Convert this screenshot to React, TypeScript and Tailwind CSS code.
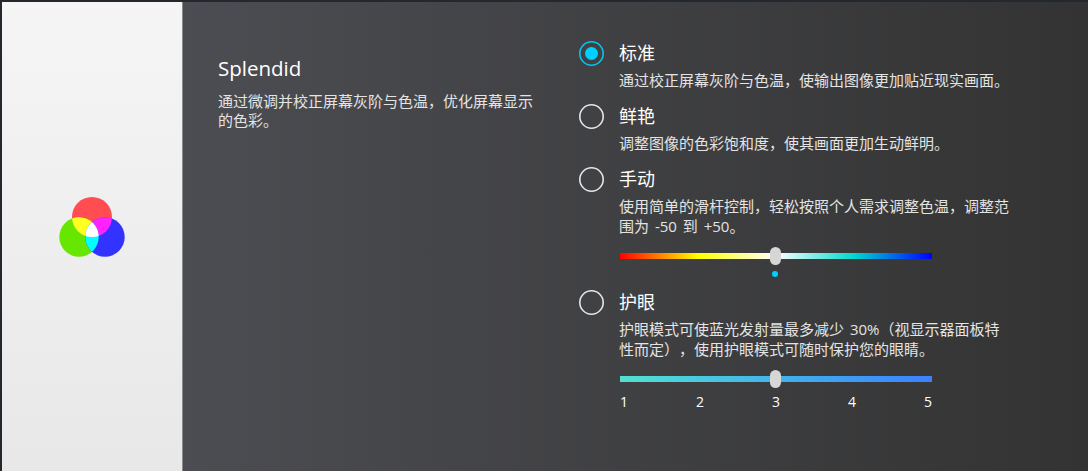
const font = { fontFamily: '"Open Sans", "Noto Sans CJK SC", sans-serif' };

function Radio({ checked }: { checked?: boolean }) {
  return (
    <svg width="25" height="25" viewBox="0 0 25 25" className="shrink-0">
      <circle cx="12.5" cy="12.5" r="11.7" fill="none" strokeWidth="1.6" stroke={checked ? '#00c8f0' : '#e6e6e6'} />
      {checked && <circle cx="12.5" cy="12.5" r="6.5" fill="#00d0ff" />}
    </svg>
  );
}

function Option({ title, checked, children, className }: { title: string; checked?: boolean; children: React.ReactNode; className?: string }) {
  return (
    <div className={`flex ${className ?? ''}`}>
      <div className="pr-[15px]">
        <Radio checked={checked} />
      </div>
      <div className="w-[395px]">
        <div className="h-[25px] text-[18px] leading-[25px] text-white">{title}</div>
        {children}
      </div>
    </div>
  );
}

function Desc({ children }: { children: React.ReactNode }) {
  return <p className="mt-[4px] text-[15px] leading-[20px] text-[#e4e4e4] [text-spacing-trim:space-all] [word-spacing:2px]">{children}</p>;
}

function Thumb() {
  return <span className="absolute left-[150px] top-1/2 h-[18px] w-[11px] -translate-y-1/2 rounded-full bg-[#d6d6d6]" />;
}

function Logo() {
  return (
    <svg width="66" height="60" viewBox="0 0 66 60">
      <defs>
        <clipPath id="r"><circle cx="33" cy="20" r="20" /></clipPath>
        <clipPath id="g"><circle cx="20" cy="40" r="19.7" /></clipPath>
      </defs>
      <circle cx="33" cy="20" r="20" fill="#ff4d52" />
      <circle cx="20" cy="40" r="19.7" fill="#66e600" />
      <circle cx="46" cy="40" r="19.7" fill="#3333ff" />
      <g clipPath="url(#r)">
        <circle cx="20" cy="40" r="19.7" fill="#ffff22" />
        <circle cx="46" cy="40" r="19.7" fill="#ff22ff" />
      </g>
      <g clipPath="url(#g)">
        <circle cx="46" cy="40" r="19.7" fill="#00ffff" />
      </g>
      <g clipPath="url(#r)">
        <g clipPath="url(#g)">
          <circle cx="46" cy="40" r="19.7" fill="#ffffff" />
        </g>
      </g>
    </svg>
  );
}

export default function App() {
  return (
    <div className="h-[471px] w-[1088px] overflow-hidden bg-[#23272e] pl-[2px] pt-[2px]" style={font}>
      <div className="flex h-[469px]">
        <div className="flex h-full w-[181px] shrink-0 items-center justify-center border-r border-[#8a8a8a] bg-gradient-to-b from-[#f5f5f5] to-[#e8e8e8] pb-[22px]">
          <div className="mt-[2px]"><Logo /></div>
        </div>
        <div className="flex flex-1 bg-gradient-to-r from-[#4c4d52] to-[#333333]">
          <div className="w-[396px] shrink-0 pl-[35px] pt-[53px] pr-[40px]">
            <div className="text-[20.5px] leading-[26px] text-white">Splendid</div>
            <p className="mt-[11px] text-[15px] leading-[19px] text-[#e4e4e4]">通过微调并校正屏幕灰阶与色温，优化屏幕显示的色彩。</p>
          </div>
          <div className="pt-[39px]">
            <Option title="标准" checked>
              <Desc>通过校正屏幕灰阶与色温，使输出图像更加贴近现实画面。</Desc>
            </Option>
            <Option title="鲜艳" className="mt-[14px]">
              <Desc>调整图像的色彩饱和度，使其画面更加生动鲜明。</Desc>
            </Option>
            <Option title="手动" className="mt-[14px]">
              <Desc>使用简单的滑杆控制，轻松按照个人需求调整色温，调整范围为 -50 到 +50。</Desc>
              <div className="relative ml-[1px] mt-[17px] h-[6px] w-[312px] bg-[linear-gradient(to_right,#ff0000,#ffff00_25%,#ffffff_50%,#00d8d0_75%,#0000ff)]">
                <Thumb />
              </div>
              <div className="ml-[153px] mt-[12px] h-[6px] w-[6px] rounded-full bg-[#00d0ff]" />
            </Option>
            <Option title="护眼" className="mt-[13px]">
              <Desc>护眼模式可使蓝光发射量最多减少 30%（视显示器面板特性而定），使用护眼模式可随时保护您的眼睛。</Desc>
              <div className="relative ml-[1px] mt-[17px] h-[6px] w-[312px] bg-gradient-to-r from-[#55e0d0] to-[#3d80ff]">
                <Thumb />
              </div>
              <div className="ml-[1px] mt-[11px] flex w-[312px] justify-between text-[14px] leading-[18px] text-white">
                <span>1</span><span>2</span><span>3</span><span>4</span><span>5</span>
              </div>
            </Option>
          </div>
        </div>
      </div>
    </div>
  );
}
